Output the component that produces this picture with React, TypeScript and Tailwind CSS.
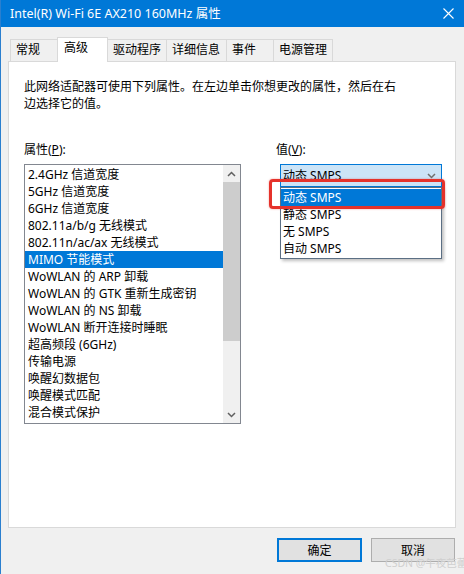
import React from 'react';

const FONT = "font-['Noto_Sans','Noto_Sans_CJK_SC',sans-serif]";

const TABS = [
  { label: '常规', w: 'w-[48px]' },
  { label: '高级', w: 'w-[51px]', active: true },
  { label: '驱动程序', w: 'w-[60px]' },
  { label: '详细信息', w: 'w-[61px]' },
  { label: '事件', w: 'w-[48px]' },
  { label: '电源管理', w: 'w-[60px]' },
];

const PROPS = [
  '2.4GHz 信道宽度',
  '5GHz 信道宽度',
  '6GHz 信道宽度',
  '802.11a/b/g 无线模式',
  '802.11n/ac/ax 无线模式',
  'MIMO 节能模式',
  'WoWLAN 的 ARP 卸载',
  'WoWLAN 的 GTK 重新生成密钥',
  'WoWLAN 的 NS 卸载',
  'WoWLAN 断开连接时睡眠',
  '超高频段 (6GHz)',
  '传输电源',
  '唤醒幻数据包',
  '唤醒模式匹配',
  '混合模式保护',
];

const VALUES = ['动态 SMPS', '静态 SMPS', '无 SMPS', '自动 SMPS'];

const Chevron = ({ up = false, color = '#606060' }: { up?: boolean; color?: string }) => (
  <svg width="9" height="6" viewBox="0 0 9 6">
    <path
      d={up ? 'M1 5 L4.5 1.5 L8 5' : 'M1 1 L4.5 4.5 L8 1'}
      fill="none"
      stroke={color}
      strokeWidth="1.5"
    />
  </svg>
);

const App: React.FC = () => {
  const selected = 5;

  return (
    <div className={`${FONT} relative w-[464px] h-[574px] overflow-hidden bg-[#f0f0f0] border-l border-[#2a7fcf] text-[12px] text-black flex flex-col`}>
      {/* title bar */}
      <div className="h-[27px] bg-[#0078d7] text-white flex items-center justify-between pl-[9px] pr-[10px]">
        <span className="leading-[17px] text-[12.5px]">Intel(R) Wi-Fi 6E AX210 160MHz 属性</span>
        <svg width="11" height="11" viewBox="0 0 11 11">
          <path d="M0.5 0.5 L10.5 10.5 M10.5 0.5 L0.5 10.5" stroke="white" strokeWidth="1.1" />
        </svg>
      </div>

      {/* tabs */}
      <div className="mt-[10px] pl-[9px] h-[24px] flex items-end relative z-10">
        {TABS.map((t, i) => (
          <div
            key={t.label}
            className={
              t.active
                ? `${t.w} h-[25px] -mb-px -ml-px bg-white border border-b-0 border-[#d9d9d9] pl-[6px] pt-[1px] leading-[17px] whitespace-nowrap`
                : `${t.w} h-[22px] ${i === 0 ? '' : '-ml-px'} bg-[#f0f0f0] border border-b-0 border-[#d9d9d9] pl-[5px] pt-[1px] leading-[17px] whitespace-nowrap`
            }
          >
            {t.label}
          </div>
        ))}
      </div>

      {/* panel */}
      <div className="ml-[7px] w-[448px] h-[467px] bg-white border border-[#d9d9d9] pl-[15px] pt-[16px] flex flex-col">
        <p className="leading-[17px] w-[380px]">
          此网络适配器可使用下列属性。在左边单击你想更改的属性，然后在右边选择它的值。
        </p>

        <div className="mt-[29px] flex">
          {/* property list */}
          <div className="w-[217px] flex flex-col">
            <div className="leading-[17px]">
              属性(<u>P</u>):
            </div>
            <div className="mt-[6px] h-[260px] border border-[#828790] flex">
              <div className="flex-1 pt-[1px] overflow-hidden">
                {PROPS.map((p, i) => (
                  <div
                    key={p}
                    className={`h-[17px] leading-[17px] pl-[3px] whitespace-nowrap ${
                      i === selected ? 'bg-[#0078d7] text-white' : ''
                    }`}
                  >
                    {p}
                  </div>
                ))}
              </div>
              <div className="w-[17px] bg-[#f0f0f0] flex flex-col">
                <div className="h-[17px] flex items-center justify-center">
                  <Chevron up />
                </div>
                <div className="h-[159px] bg-[#cdcdcd]" />
                <div className="flex-1" />
                <div className="h-[17px] flex items-center justify-center">
                  <Chevron />
                </div>
              </div>
            </div>
          </div>

          {/* value */}
          <div className="ml-[35px] w-[170px] flex flex-col">
            <div className="leading-[17px]">
              值(<u>V</u>):
            </div>
            <div className="relative mt-[6px] ml-[4px] w-[162px]">
              <div className="h-[23px] border border-[#0078d7] bg-[#cce4f7] flex items-center justify-between pl-[2px] pr-[5px]">
                <span className="leading-[17px]">动态 SMPS</span>
                <Chevron color="#707070" />
              </div>
              {/* open dropdown list */}
              <div className="absolute left-0 top-[23px] w-[162px] h-[72px] bg-white border border-[#5b6f84] py-[1px] shadow-[2px_2px_3px_rgba(0,0,0,0.25)] z-20">
                {VALUES.map((v, i) => (
                  <div
                    key={v}
                    className={`h-[17px] leading-[17px] pl-[2px] ${i === 0 ? 'bg-[#0078d7] text-white' : ''}`}
                  >
                    {v}
                  </div>
                ))}
              </div>
              {/* annotation box */}
              <div className="absolute left-[-11px] top-[15px] w-[176px] h-[30px] border-[3px] border-[#e5322b] rounded-[4px] shadow-[0_0_2px_rgba(229,50,43,0.5)] z-30" />
            </div>
          </div>
        </div>
      </div>

      {/* buttons */}
      <div className="mt-[10px] pr-[9px] flex justify-end gap-[9px]">
        <button className="w-[85px] h-[24px] bg-[#e1e1e1] border-2 border-[#0078d7] leading-[17px]">确定</button>
        <button className="w-[84px] h-[24px] bg-[#e1e1e1] border border-[#adadad] leading-[17px]">取消</button>
      </div>

      <span className="absolute left-[384px] top-[557px] text-[10.5px] leading-[13px] text-[#cfcfcf] whitespace-nowrap">
        CSDN @午夜芭蕾
      </span>
    </div>
  );
};

export default App;
